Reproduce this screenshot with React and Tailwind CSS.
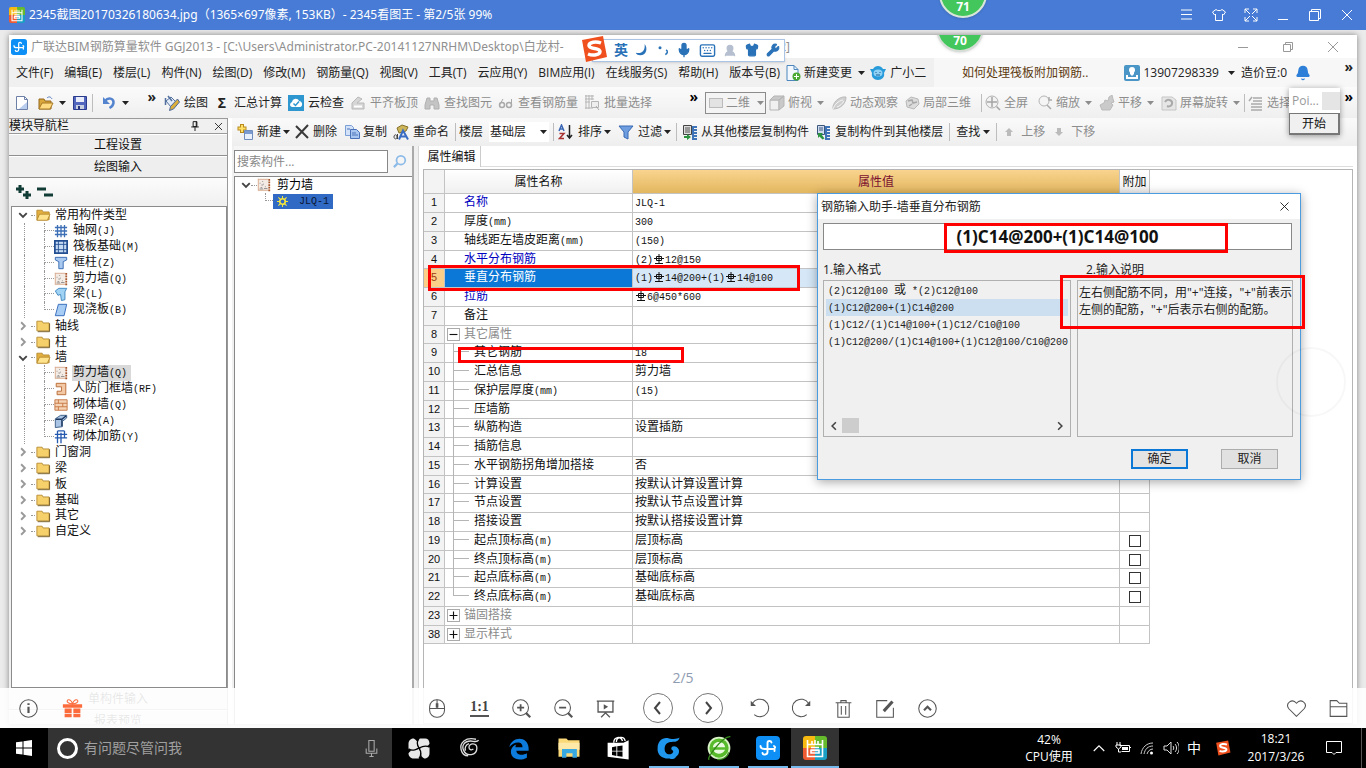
import { Bell, Keyboard, Mic, Shirt, UserRound, Wrench, X } from 'lucide-react'
import clsx from 'clsx'

const YAHEI = "font-['Open_Sans','Noto_Sans_CJK_SC',sans-serif]"
const SONG = "font-['Liberation_Mono','Noto_Sans_CJK_SC',monospace]"

const MENUS = [
  '文件(F)', '编辑(E)', '楼层(L)', '构件(N)', '绘图(D)', '修改(M)', '钢筋量(Q)', '视图(V)',
  '工具(T)', '云应用(Y)', 'BIM应用(I)', '在线服务(S)', '帮助(H)', '版本号(B)',
]

const TREE = [
  { label: '常用构件类型', open: true },
  { label: '轴网(J)', icon: 'grid' },
  { label: '筏板基础(M)', icon: 'raft' },
  { label: '框柱(Z)', icon: 'column' },
  { label: '剪力墙(Q)', icon: 'wall' },
  { label: '梁(L)', icon: 'beam' },
  { label: '现浇板(B)', icon: 'slab', last: true },
  { label: '轴线' },
  { label: '柱' },
  { label: '墙', open: true },
  { label: '剪力墙(Q)', icon: 'wall', selected: true },
  { label: '人防门框墙(RF)', icon: 'door' },
  { label: '砌体墙(Q)', icon: 'brick' },
  { label: '暗梁(A)', icon: 'hidden' },
  { label: '砌体加筋(Y)', icon: 'rebar', last: true },
  { label: '门窗洞' },
  { label: '梁' },
  { label: '板' },
  { label: '基础' },
  { label: '其它' },
  { label: '自定义' },
]

// '#' in a value stands for the HRB400 rebar sign
const ROWS = [
  { no: 1, name: '名称', value: 'JLQ-1', kind: 'link' },
  { no: 2, name: '厚度(mm)', value: '300' },
  { no: 3, name: '轴线距左墙皮距离(mm)', value: '(150)' },
  { no: 4, name: '水平分布钢筋', value: '(2)#12@150', kind: 'link' },
  { no: 5, name: '垂直分布钢筋', value: '(1)#14@200+(1)#14@100', kind: 'active' },
  { no: 6, name: '拉筋', value: '#6@450*600', kind: 'link' },
  { no: 7, name: '备注', value: '' },
  { no: 8, name: '其它属性', value: '', kind: 'group', sign: '-' },
  { no: 9, name: '其它钢筋', value: '18', child: true },
  { no: 10, name: '汇总信息', value: '剪力墙', child: true },
  { no: 11, name: '保护层厚度(mm)', value: '(15)', child: true },
  { no: 12, name: '压墙筋', value: '', child: true },
  { no: 13, name: '纵筋构造', value: '设置插筋', child: true },
  { no: 14, name: '插筋信息', value: '', child: true },
  { no: 15, name: '水平钢筋拐角增加搭接', value: '否', child: true },
  { no: 16, name: '计算设置', value: '按默认计算设置计算', child: true },
  { no: 17, name: '节点设置', value: '按默认节点设置计算', child: true },
  { no: 18, name: '搭接设置', value: '按默认搭接设置计算', child: true },
  { no: 19, name: '起点顶标高(m)', value: '层顶标高', child: true, check: true },
  { no: 20, name: '终点顶标高(m)', value: '层顶标高', child: true, check: true },
  { no: 21, name: '起点底标高(m)', value: '基础底标高', child: true, check: true },
  { no: 22, name: '终点底标高(m)', value: '基础底标高', child: true, check: true, last: true },
  { no: 23, name: '锚固搭接', value: '', kind: 'group', sign: '+' },
  { no: 38, name: '显示样式', value: '', kind: 'group', sign: '+' },
]

const FORMATS = [
  '(2)C12@100 或 *(2)C12@100',
  '(1)C12@200+(1)C14@200',
  '(1)C12/(1)C14@100+(1)C12/C10@100',
  '(1)C12@200/(1)C14@100+(1)C12@100/C10@200',
]

function Rebar() {
  return (
    <svg viewBox="0 0 12 12" className="inline-block h-3 w-3 align-[-2px]" fill="none" stroke="currentColor">
      <path d="M3.500 3.500h5v4h-5zM6 1v9.500M1 5.500h10M2 10.500h8" />
    </svg>
  )
}

// Half-width runs are set at 10px so that two of them fill one 12px ideograph
function Song({ text }) {
  return (
    <span className={clsx(SONG, 'whitespace-pre text-xs')}>
      {text.split(/([\x20-\x22\x24-\x7e]+|#)/).filter(Boolean).map((part, i) => {
        if (part === '#') return <Rebar key={i} />
        return /^[\x20-\x7e]/.test(part) ? <span key={i} className="text-[10px]">{part}</span> : part
      })}
    </span>
  )
}

function Caret() {
  return <svg viewBox="0 0 7 4" className="h-1 w-[7px] shrink-0"><path d="M0 0h7L3.5 4z" fill="currentColor" /></svg>
}

function Svg({ children, className = 'h-4 w-4', box = '0 0 16 16' }) {
  return <svg viewBox={box} className={clsx('shrink-0', className)} fill="none">{children}</svg>
}

const ICONS = {
  file: <><path d="M2.500 1.500h8l3 3v10h-11z" fill="#fff" stroke="#6d80a8" /><path d="M10.500 1.500v3h3" stroke="#6d80a8" /><path d="M5 14h8V7z" fill="#b9cdee" /></>,
  open: <><path d="M1 14V4h5l1 2h6v8z" fill="#d9a73b" stroke="#94671d" /><path d="M1 14l3-6h11l-3 6z" fill="#ffdb82" stroke="#a87824" /><path d="M9 3c2-2 4-1 5 1" stroke="#567cc0" /></>,
  save: <><path d="M1.500 1.500h13v13h-13z" fill="#5266bd" stroke="#2a3a8c" /><path d="M4 2h8v5H4z" fill="#e9edfa" /><path d="M4 10h8v4H4z" fill="#c8cfdf" /><path d="M6 11h2v3H6z" fill="#27357e" /></>,
  undo: <><path d="M4 6C7 2 13 3 12.500 8c-.5 3-2 4-4 5" stroke="#5584cf" strokeWidth="2.500" /><path d="M2 2v7h7z" fill="#5584cf" /></>,
  draw: <><path d="M2 6l5-4 5 5-5 5z" fill="#e4ecf8" stroke="#52719f" /><path d="M1.500 3v7M4 1l4 5" stroke="#52719f" strokeWidth="1.500" /><path d="M13.500 4l2 3-6 7-4 1.500 1-4z" fill="#d9ae3d" stroke="#4a68a0" /></>,
  cloud: <><rect width="16" height="16" fill="#2e97d0" /><path d="M4 12c-3-1-2-4 0-5 1-4 6-4 7-1 4 0 4 6 1 6z" fill="#fff" /><path d="M5.500 8.500l2 2 3.500-4" stroke="#2e97d0" strokeWidth="1.500" /></>,
  align: <><path d="M2 8l6-6 4 2-5 4h7v6H2z" fill="#d6d6d6" stroke="#b8b8b8" /><path d="M4 11.500h8" stroke="#fff" strokeWidth="2" /></>,
  find: <path d="M3 3h3v3h4V3h3l2 7v4h-5v-4H6v4H1v-4z" fill="#c4c4c4" stroke="#b0b0b0" />,
  view: <><circle cx="4" cy="10" r="2.500" stroke="#a9a9a9" strokeWidth="1.500" /><circle cx="11" cy="10" r="2.500" stroke="#a9a9a9" strokeWidth="1.500" /><path d="M1.500 10L5 4M13.500 10V4" stroke="#a9a9a9" /></>,
  batch: <><path d="M1 1h9M1 4h9M1 7h5M2 0v14M5 0v14M8 0v5M1 13h8" stroke="#b5b5b5" /><path d="M7.500 6.500h7v6h-7z" fill="#eee" stroke="#b5b5b5" /><path d="M12 11l3 4" stroke="#aaa" /></>,
  cube: <><path d="M1 5h9v10H1z" fill="#f0f0f0" stroke="#b5b5b5" /><path d="M1 5l4-4h10l-5 4zM10 5l5-4v10l-5 4z" fill="#c9c9c9" stroke="#b5b5b5" /></>,
  orbit: <><path d="M2 14C1 8 8 1 15 2c0 7-6 12-13 12z" fill="#cfcfcf" stroke="#bbb" /><path d="M2 14c2-5 5-8 10-9M6 12c3-1 5-3 7-6" stroke="#f5f5f5" /></>,
  local: <><path d="M2 6l5-4 7 2 1 5-5 5-7-2z" fill="#dcdcdc" stroke="#b8b8b8" /><path d="M4 6l4-1 1 3 4-1M5 11l3-2" stroke="#a8a8a8" strokeWidth="1.500" /></>,
  full: <><circle cx="7" cy="7" r="6" fill="#f2f2f2" stroke="#b0b0b0" /><path d="M7 2v10M2 7h10M11.500 11.500L15 15" stroke="#a5a5a5" strokeWidth="1.500" /></>,
  zoom: <><circle cx="7" cy="6" r="5" fill="#f5f5f5" stroke="#b5b5b5" /><path d="M10 10l4 4M12 2v3h3" stroke="#aaa" strokeWidth="1.500" /></>,
  pan: <path d="M3 15l-2-5 4-2 1-3 3 1 1-4 3-2 1 4 1 3-3 1 2 2-3 5z" fill="#cacaca" stroke="#bbb" />,
  rotate: <><path d="M1 2h10l4 3v10H1z" fill="#e6e6e6" stroke="#c5c5c5" /><path d="M4 7c2-4 8-2 7 2-.5 2-3 3-5 2" stroke="#aaa" strokeWidth="2" /></>,
  pick: <path d="M5 3h9M5 6h9M3 9h11M3 12h11M3 15h11M1 6l3-4" stroke="#aaa" strokeWidth="1.500" />,
  create: <><path d="M5 0v9M.5 4.500h9" stroke="#b88a1c" strokeWidth="4" /><path d="M5 1v7M1.500 4.500h7" stroke="#ffe169" strokeWidth="2" /><path d="M7.500 6.500h8v9h-8z" fill="#e8f0fb" stroke="#6f8cbd" /><path d="M8 7h7v3H8z" fill="#7c9bd0" /></>,
  remove: <path d="M2 2l12 12M14 1L2 14" stroke="#3a3a3a" strokeWidth="2" />,
  copy: <><path d="M1.500 1.500h6l2 2v8h-8z" fill="#d3e2f8" stroke="#7ba0d6" /><path d="M6.500 5.500h6l3 3v6h-9z" fill="#a9c6f0" stroke="#4a72b8" /><path d="M8 9h4M8 11h6M3 5h3" stroke="#4a72b8" /></>,
  rename: <><path d="M4 4l5-3 6 2-2 4-7 2z" fill="#cdb65a" stroke="#85702c" /><path d="M1 13c0-3 3-3 3 0s-3 2-3 0M4.500 10v5" stroke="#444" /><path d="M6 15.500l4-9 5 9M8 12.500h6" stroke="#3b6cc4" strokeWidth="2" /></>,
  sort: <><path d="M1 7l2.500-6L6 7M2 5h3" stroke="#3a67b5" strokeWidth="1.500" /><path d="M1.500 9.500H6L1.500 14.500H6" stroke="#a33" strokeWidth="1.500" /><path d="M11.500 1v13M9 11l2.500 3L14 11" stroke="#222" strokeWidth="1.500" /></>,
  filter: <path d="M1 2h14l-5 6v7l-4-2V8z" fill="#6f9ee0" stroke="#3969b2" />,
  from: <><path d="M1.500 1.500h8v9h-8z" fill="#ddd" stroke="#444" /><path d="M3 4h5M3 6h5M3 8h5" stroke="#555" /><path d="M15 3h-4v12h4M11 6h4M11 9h4M11 12h4" stroke="#3f75b8" strokeWidth="2" /><path d="M2 12h3v-2l4 3-4 3v-2H2z" fill="#2c9440" /></>,
  to: <><path d="M2.500 1.500h7v9h-7z" fill="#cfdcf0" stroke="#3d567c" /><path d="M4 4h4M4 6h4" stroke="#3d567c" /><path d="M15 3h-4v12h4M11 6h4M11 9h4M11 12h4" stroke="#3f75b8" strokeWidth="2" /><path d="M3 9h5L6.500 10.500l3 4-2 1-3-3L3 14z" fill="#2c9440" /></>,
  up: <path d="M8 4l4 4h-2v4H6V8H4z" fill="#bbb" />,
  down: <path d="M8 12l4-4h-2V4H6v4H4z" fill="#bbb" />,
  change: <><path d="M2 .5h7l4 4v11H2z" fill="#f3f8ff" stroke="#4d86bd" /><path d="M9 .5v4h4" stroke="#4d86bd" /><circle cx="11.500" cy="11.500" r="4" fill="#48a832" /><path d="M11.500 9v5M9 11.500h5" stroke="#fff" /></>,
  mascot: <><path d="M0 4l3 0c2-4 8-4 10 0h3l-2 4c1 4-2 7-6 7s-7-3-6-7z" fill="#289bdb" /><ellipse cx="8" cy="8" rx="4.500" ry="3.500" fill="#8fd0f5" /><path d="M6 7v1M10 7v1M6 10h4" stroke="#1c5e92" /></>,
  account: <><rect width="16" height="16" rx="2" fill="#4a97c7" /><circle cx="8" cy="5" r="3" fill="#fff" /><path d="M6 7h4v2l-2 2-2-2z" fill="#fff" /><path d="M3 10v3h10v-3" stroke="#fff" strokeWidth="2" /></>,
  grid: <path d="M4 1v14M8 1v14M12 1v14M1 4h14M1 8h14M1 12h14" stroke="#3c6fb6" strokeWidth="1.500" />,
  raft: <><rect x="1" y="1" width="14" height="14" fill="#c5daf3" stroke="#234f92" strokeWidth="2" /><path d="M5 1v14M11 1v14M1 5h14M1 11h14" stroke="#234f92" /></>,
  column: <path d="M1.500 1.500h13v3l-4 2v8h-5v-8l-4-2z" fill="#a9c9f0" stroke="#2d62ad" />,
  wall: <><path d="M1 1h14v14H1z" fill="#f4ebe5" /><path d="M1 1.500h12M1.500 1v13M1 14h14" stroke="#d8a98c" /><path d="M3 6h1M6 4h1M5 8h2M9 10h1M4 11h2M8 12h4M7 7h1M3 12.500h4" stroke="#888" /><path d="M14 1v14" stroke="#a8562b" strokeDasharray="2 1" strokeWidth="2" /></>,
  beam: <path d="M1.500 4.500l4-3h9l-2 4v9l-4 1-1-7-3 1z" fill="#9fd2f3" stroke="#3781bd" />,
  slab: <path d="M5 1.500h9.500l-3 13H1.500z" fill="#a8cdf5" stroke="#2a62b5" />,
  door: <path d="M2.500 1.500h11v13h-10v-4h5v-5h-6z" fill="#f3c8a4" stroke="#b5652d" />,
  brick: <><path d="M1 2h14v12H1z" fill="#f5d3b5" stroke="#c4733f" /><path d="M1 6h14M1 10h14M5 2v4M10 6v4M5 10v4" stroke="#c4733f" /></>,
  hidden: <><path d="M1.500 5.500l6-4h7v3l-5 4v6l-8 1z" fill="#a9c4e4" stroke="#33567f" /><path d="M2 6h7l5-4M9 6v8" stroke="#1b355c" strokeWidth="1.500" /></>,
  rebar: <path d="M4 1v14M8 3v12M1 5h14M1 9h14M12 1v8M4 1h8" stroke="#2459b0" strokeWidth="1.500" />,
}

function Glyph({ name, className }) {
  return <Svg className={className}>{ICONS[name]}</Svg>
}

function Tool({ icon, label, caret, muted, narrow, children }) {
  return (
    <button className={clsx('flex h-6 shrink-0 items-center whitespace-nowrap', muted ? 'text-[#8d8d8d]' : 'text-[#222]')}>
      <span className={clsx('flex shrink-0 justify-center', narrow ? 'w-[22px]' : 'w-6')}>
        {children || <Glyph name={icon} />}
      </span>
      {label}
      {caret && <span className={clsx('flex justify-center', narrow ? 'w-4' : 'w-[10px]')}><Caret /></span>}
    </button>
  )
}

function Sep() {
  return <span className="h-[18px] w-px shrink-0 bg-[#bdbdbd]" />
}

function Logo2345({ className }) {
  return (
    <Svg className={className} box="0 0 24 24">
      <path d="M0 3a3 3 0 013-3h9v12H0z" fill="#f5b911" />
      <path d="M12 0h9a3 3 0 013 3v9H12z" fill="#66bb2c" />
      <path d="M0 12h12v12H3a3 3 0 01-3-3z" fill="#ee5a32" />
      <path d="M12 12h12v9a3 3 0 01-3 3h-9z" fill="#1a9fc4" />
      <path d="M4.500 4v16.500h15V4M4.500 8.500h15M9 5v3M12 4v4M15 5v3M8 11.500h8M7.500 14h9M8 17h8v-2.500H8z" stroke="#fff" strokeWidth="1.600" />
    </Svg>
  )
}

function LogoGgj({ className }) {
  return (
    <Svg className={className} box="0 0 24 24">
      <rect width="24" height="24" rx="4" fill="#0d8ff5" />
      <path d="M15.500 6.500c-.5-2-4-2-4 .5v9c0 3-4.500 3.500-5 1M4.500 10c0 2 1 3 4 3h8c2.500 0 3.500-2 1.500-3M18.500 13v2" stroke="#fff" strokeWidth="1.900" strokeLinecap="round" />
    </Svg>
  )
}

function LogoSogou({ className }) {
  return (
    <Svg className={className} box="0 0 28 28">
      <path d="M2 5L23 1l4 21-21 5z" fill="#f0501e" />
      <path d="M21 8c-5-2-12-1-12 2.500 0 4 11 2 11 6 0 3.500-7 4.500-12 2.500" stroke="#fff" strokeWidth="3.500" />
    </Svg>
  )
}

function ViewerTitle() {
  return (
    <header className="relative flex h-[30px] shrink-0 items-center overflow-hidden bg-[#477bd5] pl-[9px] text-xs text-white">
      <Logo2345 className="h-4 w-4" />
      <h1 className="ml-1 flex-1 font-['Noto_Sans','Noto_Sans_CJK_SC',sans-serif] whitespace-nowrap">2345截图20170326180634.jpg（1365×697像素, 153KB）- 2345看图王 - 第2/5张 99%</h1>
      <div className="absolute top-[-30px] left-[939px] flex h-12 w-12 items-end justify-center rounded-full border-2 border-[#d9e6da] bg-[#43c75c] pb-[3px] leading-3 font-bold shadow">71</div>
      <div className="flex pr-[3px]">
        {[
          ['菜单', 'M2 3h11M2 7.500h11M2 12h11'],
          ['换肤', 'M5 2.500L1.500 5l2 3 1-1v6.500h7V7l1 1 2-3L11 2.500c-1 1.500-5 1.500-6 0z'],
          ['全屏', 'M2 6V2h4M10 2h4v4M14 10v4h-4M6 14H2v-4M2 2l5 5M14 2L9 7M14 14L9 9M2 14l5-5'],
          ['最小化', 'M3 12.500h10'],
          ['还原', 'M2.500 4.500h9v9h-9zM4.500 4V2.500h9v9H12'],
          ['关闭', 'M3 3l10 10M13 3L3 13'],
        ].map(([name, d]) => (
          <button key={name} aria-label={name} className="flex w-8 justify-center">
            <Svg><path d={d} stroke="#fff" /></Svg>
          </button>
        ))}
      </div>
    </header>
  )
}

function AppTitle() {
  return (
    <div className="relative flex h-[23px] shrink-0 items-center overflow-hidden bg-white pl-[2px] text-xs text-[#8f8f8f]">
      <LogoGgj className="h-4 w-4" />
      <h2 className="ml-1 flex w-[759px] shrink-0 justify-between font-['Noto_Sans','Noto_Sans_CJK_SC',sans-serif] whitespace-nowrap">
        <span>广联达BIM钢筋算量软件 GGJ2013 - [C:\Users\Administrator.PC-20141127NRHM\Desktop\白龙村-</span>
        <span>2]</span>
      </h2>
      <div className="absolute top-[-31px] left-[927px] flex h-12 w-12 items-end justify-center rounded-full border-2 border-[#d5ddd6] bg-[#43c75c] pb-[3px] leading-3 font-bold text-white shadow">70</div>
      <div className="ml-auto flex pr-[2px] text-[#999]">
        {[
          ['最小化', 'M3 8.500h10'],
          ['还原', 'M3.500 5.500h7v7h-7zM5.500 5V3.500h7v7H11'],
          ['关闭', 'M3 3l10 10M13 3L3 13'],
        ].map(([name, d]) => (
          <button key={name} aria-label={name} className="flex w-[45px] justify-center">
            <Svg><path d={d} stroke="currentColor" /></Svg>
          </button>
        ))}
      </div>
    </div>
  )
}

function SogouBar() {
  return (
    <div className="absolute top-0 left-[571px] z-10 flex h-7 w-[205px] items-center">
      <div className="mt-[2px] ml-3 flex h-[23px] w-full items-center justify-between border border-[#a9c4e4] bg-white pr-1 pl-[21px] text-[#2a72b8] shadow-sm">
        <b className="text-[14px] leading-none">英</b>
        <Svg className="h-[14px] w-[14px]"><path d="M11 1c4 5 2 13-5 13-3 0-5-2-5-3 6 2 11-2 10-10z" fill="currentColor" /></Svg>
        <Svg className="h-[14px] w-[12px]"><circle cx="4" cy="5" r="2" fill="currentColor" /><path d="M12 8c3 1 2 5-1 6" stroke="currentColor" strokeWidth="2" /></Svg>
        <Mic className="h-4 w-4" fill="currentColor" />
        <Keyboard className="h-[17px] w-[17px]" />
        <UserRound className="h-[15px] w-[14px] text-[#b5bfd0]" fill="currentColor" />
        <Shirt className="h-[14px] w-[14px]" fill="currentColor" />
        <Wrench className="h-[14px] w-[14px]" fill="currentColor" />
      </div>
      <LogoSogou className="absolute left-0 h-7 w-7" />
    </div>
  )
}

function MenuBar() {
  return (
    <nav className="flex h-[29px] shrink-0 items-center overflow-hidden bg-[#f0f0f0] text-xs whitespace-nowrap text-[#222]">
      <div className="flex h-full flex-1 items-center gap-[5px] pl-[7px]">
        <div className="flex gap-[11px]">
          {MENUS.map((menu) => <button key={menu}>{menu}</button>)}
        </div>
        <button className="flex items-center gap-[3px]"><Glyph name="change" />新建变更<span className="ml-[3px]"><Caret /></span></button>
        <button className="flex items-center gap-1"><Glyph name="mascot" />广小二</button>
      </div>
      <div className="flex h-full w-[423px] shrink-0 items-center bg-[#f7f7f7]">
        <a href="#help" className="ml-7 flex-1 text-[#5c3a10]">如何处理筏板附加钢筋..</a>
        <button className="flex items-center gap-1"><Glyph name="account" />13907298339<span className="mx-[5px]"><Caret /></span></button>
        <button className="ml-px flex items-center gap-2">造价豆:0<Bell className="h-4 w-4 text-[#2d7fd8]" fill="currentColor" /></button>
        <button aria-label="更多" className="mb-3 w-[46px] pr-1 text-right text-sm leading-4 font-bold">»</button>
      </div>
    </nav>
  )
}

function MainToolbar() {
  return (
    <div className="flex h-[31px] shrink-0 items-center bg-gradient-to-b from-[#fbfbfb] to-[#efefef] text-xs">
      <div className="flex w-[149px] shrink-0 items-center pl-[5px] text-[#222]">
        <button aria-label="新建" className="w-6"><Glyph name="file" /></button>
        <button aria-label="打开" className="flex w-[34px] items-center gap-[5px]"><Glyph name="open" /><Caret /></button>
        <button aria-label="保存" className="w-5"><Glyph name="save" /></button>
        <Sep />
        <button aria-label="撤销" className="ml-2 flex items-center gap-[5px]"><Glyph name="undo" /><Caret /></button>
        <span className="mb-3 ml-auto pr-[2px] text-sm leading-4 font-bold">»</span>
      </div>
      <div className="flex w-[545px] shrink-0 items-center gap-[2px] pl-[2px]">
        <Tool icon="draw" label="绘图" />
        <Tool label="汇总计算"><b className="text-sm">Σ</b></Tool>
        <Tool icon="cloud" label="云检查" />
        <Tool icon="align" label="平齐板顶" muted />
        <Tool icon="find" label="查找图元" muted />
        <Tool icon="view" label="查看钢筋量" muted />
        <Tool icon="batch" label="批量选择" muted />
        <span className="mb-3 ml-auto pr-[5px] text-sm leading-4 font-bold">»</span>
      </div>
      <button className="ml-[2px] flex h-[22px] w-[61px] shrink-0 items-center gap-[3px] border border-[#8c8c8c] bg-[#f4f4f4] pl-[3px] text-[#8d8d8d]">
        <span className="h-[10px] w-[14px] border border-[#bbb] bg-[#e3e3e3]" />二维<span className="ml-1"><Caret /></span>
      </button>
      <div className="flex flex-1 items-center overflow-hidden">
        <Tool icon="cube" label="俯视" caret muted narrow />
        <Tool icon="orbit" label="动态观察" muted narrow />
        <span className="w-[3px]" />
        <Tool icon="local" label="局部三维" muted narrow />
        <span className="w-[10px]" />
        <Sep />
        <Tool icon="full" label="全屏" muted narrow />
        <span className="w-[6px]" />
        <Tool icon="zoom" label="缩放" caret muted narrow />
        <Tool icon="pan" label="平移" caret muted narrow />
        <Tool icon="rotate" label="屏幕旋转" caret muted narrow />
        <Sep />
        <Tool icon="pick" label="选择" muted narrow />
      </div>
      <span className="mb-3 pr-1 text-sm leading-4 font-bold">»</span>
    </div>
  )
}

function Folder({ open }) {
  return (
    <Svg className="h-[14px] w-4">
      <path d="M1 2.500h6l1 2h7v9H1z" fill={open ? '#e3b040' : '#f6d06a'} stroke="#b5892e" />
      {open ? <path d="M1 14l3-7h12l-3 7z" fill="#ffe28c" stroke="#b5892e" /> : <path d="M2 14.500h13.500V5" stroke="#6e551f" />}
    </Svg>
  )
}

function TreeRow({ item }) {
  if (item.icon) {
    return (
      <li className="flex h-4 items-center pl-3 nth-[5n]:h-[15px]">
        <span className="h-full w-5 border-l border-dotted border-[#999]" />
        <span className="flex h-full w-[10px] flex-col">
          <span className="h-1/2 border-b border-l border-dotted border-[#999]" />
          <span className={clsx('h-1/2', !item.last && 'border-l border-dotted border-[#999]')} />
        </span>
        <Glyph name={item.icon} className="h-[14px] w-[14px]" />
        <span className={clsx('ml-1 flex h-full items-center pl-px pr-1', item.selected && 'bg-[#d9d9d9]')}><Song text={item.label} /></span>
      </li>
    )
  }
  return (
    <li className="flex h-4 items-center pl-[6px] nth-[5n]:h-[15px]">
      <Svg className="h-[10px] w-[10px]">
        <path d={item.open ? 'M2 5l6 6 6-6' : 'M5 2l6 6-6 6'} stroke={item.open ? '#444' : '#999'} strokeWidth="3" />
      </Svg>
      <span className="ml-[3px] w-1 border-t border-dotted border-[#999]" />
      <Folder open={item.open} />
      <span className="ml-1"><Song text={item.label} /></span>
    </li>
  )
}

function NavPanel() {
  const bar = 'flex h-[22px] w-full shrink-0 items-center justify-center border-t border-b border-t-white border-b-[#8f8f8f] bg-[#eee]'
  return (
    <aside className="flex w-[219px] shrink-0 flex-col border-r border-[#999] bg-[#f0f0f0] text-xs text-[#111]">
      <div className="flex h-4 shrink-0 items-center border-t border-b border-[#9b9b9b]">
        <span className="flex-1">模块导航栏</span>
        <Svg className="mr-3 h-[10px] w-[10px]"><path d="M5 1h6v8H5zM2 9.500h12M8 10v6M10 1v8" stroke="#111" strokeWidth="1.500" /></Svg>
        <X className="mr-[2px] h-[13px] w-[13px]" strokeWidth={1.500} />
      </div>
      <button className={bar}>工程设置</button>
      <button className={bar}>绘图输入</button>
      <div className="flex h-7 shrink-0 items-center gap-[6px] bg-gradient-to-b from-[#fcfcfc] to-[#f0f0f0] pl-[6px]">
        <Svg className="h-4 w-4"><path d="M5 1v8M1 5h8M12 7v8M8 11h8" stroke="#123c36" strokeWidth="3" /></Svg>
        <Svg className="h-4 w-4"><path d="M0 5h9M7 11h9" stroke="#123c36" strokeWidth="3" /></Svg>
      </div>
      <ul className="ml-[2px] h-[482px] shrink-0 border border-[#8b8b8b] bg-white">
        {TREE.map((item, i) => <TreeRow key={i} item={item} />)}
      </ul>
      <button className={bar}>单构件输入</button>
      <button className={bar}>报表预览</button>
    </aside>
  )
}

function ComponentToolbar() {
  return (
    <div className="flex h-7 shrink-0 items-center bg-gradient-to-b from-[#fafafa] to-[#eee] pl-px text-xs">
      <Tool icon="create" label="新建" caret />
      <Tool icon="remove" label="删除" narrow />
      <span className="w-1" />
      <Tool icon="copy" label="复制" narrow />
      <span className="w-[2px]" />
      <Tool icon="rename" label="重命名" />
      <span className="w-[6px]" />
      <Sep />
      <label htmlFor="floor" className="pl-[3px] text-[#222]">楼层</label>
      <span className="relative ml-[6px] flex items-center text-[#222]">
        <select id="floor" className="h-5 w-[60px] appearance-none bg-white pl-px">
          <option>基础层</option>
        </select>
        <span className="pointer-events-none absolute right-[2px]"><Caret /></span>
      </span>
      <span className="w-1" />
      <Sep />
      <Tool icon="sort" label="排序" caret />
      <span className="w-[2px]" />
      <Tool icon="filter" label="过滤" caret />
      <span className="w-1" />
      <Sep />
      <span className="w-[2px]" />
      <Tool icon="from" label="从其他楼层复制构件" narrow />
      <span className="w-[2px]" />
      <Tool icon="to" label="复制构件到其他楼层" />
      <span className="w-[6px]" />
      <Sep />
      <button className="flex items-center gap-[3px] px-[6px] text-[#222]">查找<Caret /></button>
      <Sep />
      <Tool icon="up" label="上移" muted />
      <span className="w-[2px]" />
      <Tool icon="down" label="下移" muted />
    </div>
  )
}

function ComponentList() {
  return (
    <section className="flex w-[182px] shrink-0 flex-col border-r-2 border-[#aaa] pl-[2px] text-xs">
      <div className="flex h-[30px] shrink-0 items-center bg-[#f5f5f5]">
        <input aria-label="搜索构件" placeholder="搜索构件..." className="h-[23px] min-w-0 flex-1 border border-[#888] bg-white pl-[2px] placeholder:text-[#888]" />
        <button aria-label="搜索" className="flex w-6 justify-center">
          <Svg className="h-[14px] w-[14px]"><circle cx="9" cy="7" r="5" stroke="#8dbbe8" strokeWidth="2" /><path d="M5 11l-4 4" stroke="#8dbbe8" strokeWidth="2.500" /></Svg>
        </button>
      </div>
      <ul className="flex-1 border-t border-l border-[#888] bg-white">
        <li className="flex h-4 items-center pl-[6px]">
          <Svg className="h-[10px] w-[10px]"><path d="M2 5l6 6 6-6" stroke="#444" strokeWidth="3" /></Svg>
          <span className="w-[6px] border-t border-dotted border-[#999]" />
          <Glyph name="wall" className="h-[14px] w-[14px]" />
          <span className="ml-[6px]">剪力墙</span>
        </li>
        <li className="flex h-4 items-center pl-[30px]">
          <span className="mb-2 h-2 w-2 border-b border-l border-dotted border-[#999]" />
          <span className="flex h-[15px] items-center gap-[11px] bg-[#316ac5] px-1 text-[#0a1630]">
            <Svg className="h-[11px] w-[11px]"><circle cx="8" cy="8" r="4" stroke="#f5e63c" strokeWidth="2.500" /><path d="M8 0v4M8 12v4M0 8h4M12 8h4M2 2l3 3M11 11l3 3M14 2l-3 3M5 11l-3 3" stroke="#f5e63c" strokeWidth="1.500" /></Svg>
            <Song text="JLQ-1" />
          </span>
        </li>
      </ul>
    </section>
  )
}

function PropertyRow({ row }) {
  const active = row.kind === 'active'
  const cell = 'border-r border-b border-[#c3c3c3] p-0 align-top'
  return (
    <tr className="h-[19px] nth-[4n]:h-[18px]">
      <th scope="row" className={clsx(cell, 'font-normal', active ? 'bg-[#fbcf87] text-[#a03a10]' : 'bg-[#f3f3f3]')}>
        <div className="h-[17px] overflow-hidden text-center font-['Liberation_Sans',sans-serif] text-[11px] leading-[17px]">{row.no}</div>
      </th>
      <td className={clsx(cell, active && 'bg-[#0b78d7] text-white', row.kind === 'link' && 'text-[#0000c0]', row.kind === 'group' && 'text-[#8a8a8a]')}>
        <div className="flex h-[17px] items-center">
          {row.sign && (
            <button aria-label={row.name} className="mx-[2px] flex h-[13px] w-[13px] items-center justify-center border border-[#aaa] bg-white">
              <Svg className="h-[9px] w-[9px]"><path d={row.sign === '+' ? 'M1 8h14M8 1v14' : 'M1 8h14'} stroke="#111" strokeWidth="2" /></Svg>
            </button>
          )}
          {row.child && (
            <span className="ml-2 flex h-[19px] w-[21px] shrink-0 flex-col">
              <span className="h-[9px] w-4 border-b border-l border-[#b5b5b5]" />
              <span className={clsx('h-[10px]', !row.last && 'border-l border-[#b5b5b5]')} />
            </span>
          )}
          <span className={clsx(row.sign ? 'ml-[2px]' : !row.child && 'ml-[19px]')}><Song text={row.name} /></span>
        </div>
      </td>
      <td className={clsx(cell, active && 'bg-[#d6e8f8]')}>
        <div className="flex h-[17px] items-center overflow-hidden pl-[2px]"><Song text={row.value} /></div>
      </td>
      <td className={cell}>
        <div className="flex h-[17px] items-center justify-center">
          {row.check && <input type="checkbox" aria-label={row.name} className="h-3 w-3 appearance-none border border-[#333] bg-white" />}
        </div>
      </td>
    </tr>
  )
}

function PropertyPanel() {
  return (
    <section className="flex min-w-0 flex-1 flex-col border-l border-[#d5d5d5] bg-white pr-1 pl-1 text-xs text-[#111]">
      <div className="flex h-[21px] shrink-0 items-end">
        <button className="h-full w-[58px] border-r border-[#ccc] text-center">属性编辑</button>
        <span className="flex-1 border-b border-[#ddd]" />
      </div>
      <div className="mt-[2px] flex-1 border border-[#b5b5b5]">
        <table className="table-fixed border-separate border-spacing-0">
          <colgroup>
            <col className="w-[21px]" />
            <col className="w-[188px]" />
            <col className="w-[487px]" />
            <col className="w-[30px]" />
          </colgroup>
          <thead>
            <tr className="h-6">
              <th className="border-r border-b border-[#c3c3c3] bg-[#f3f3f3] p-0" />
              <th className="border-r border-b border-[#c3c3c3] bg-gradient-to-b from-white to-[#f0f0f0] p-0 font-normal">属性名称</th>
              <th className="border-r border-b border-[#c3c3c3] bg-gradient-to-b from-[#f9d48e] to-[#e3b75f] p-0 font-normal text-[#7a1030]">属性值</th>
              <th className="border-r border-b border-[#c3c3c3] bg-gradient-to-b from-white to-[#f0f0f0] p-0 font-normal">附加</th>
            </tr>
          </thead>
          <tbody>
            {ROWS.map((row) => <PropertyRow key={row.no} row={row} />)}
          </tbody>
        </table>
      </div>
    </section>
  )
}

function RebarDialog() {
  return (
    <div role="dialog" aria-label="钢筋输入助手" className="absolute top-[158px] left-[808px] flex h-[287px] w-[484px] flex-col border border-[#4a9be0] bg-[#f0f0f0] text-xs text-[#222] shadow-[0_2px_10px_rgba(0,0,0,0.35)]">
      <div className="flex h-[25px] shrink-0 items-center justify-between bg-white pr-2 pl-[3px]">
        <h3>钢筋输入助手-墙垂直分布钢筋</h3>
        <button aria-label="关闭"><X className="h-[15px] w-[15px]" strokeWidth={1.500} /></button>
      </div>
      <input
        aria-label="钢筋信息"
        defaultValue="(1)C14@200+(1)C14@100"
        className="mr-2 ml-[5px] mt-1 h-[27px] shrink-0 border border-[#888] bg-white text-center font-['Noto_Sans',sans-serif] text-[17px] font-bold text-[#111]"
      />
      <div className="mx-[5px] mt-[9px] flex h-[21px] items-center">
        <h4 className="w-[263px]">1.输入格式</h4>
        <h4>2.输入说明</h4>
      </div>
      <div className="mr-2 ml-[5px] flex h-[157px] gap-[6px]">
        <div className="flex w-[249px] flex-col border border-[#b0b0b0] px-[2px] pb-[2px]">
          <ul className="flex-1 pt-[1px]">
            {FORMATS.map((format, i) => (
              <li key={format} className={clsx('flex h-[17px] items-center pl-[2px]', i === 1 && 'bg-[#cbdff0]')}><Song text={format} /></li>
            ))}
          </ul>
          <div className="flex h-[17px] items-center px-[3px]">
            <Svg className="h-[10px] w-[10px]"><path d="M11 2L5 8l6 6" stroke="#444" strokeWidth="2.500" /></Svg>
            <span className="ml-[3px] h-[15px] w-[17px] bg-[#cdcdcd]" />
            <Svg className="ml-auto h-[10px] w-[10px]"><path d="M5 2l6 6-6 6" stroke="#444" strokeWidth="2.500" /></Svg>
          </div>
        </div>
        <p className="flex-1 border border-[#b0b0b0] pt-[3px] pl-px leading-[17px] whitespace-nowrap">
          左右侧配筋不同，用"+"连接，"+"前表示<br />左侧的配筋，"+"后表示右侧的配筋。
        </p>
      </div>
      <div className="mt-3 mr-[22px] flex justify-end gap-[33px]">
        <button className="h-5 w-[57px] border-2 border-[#0b78d7] bg-[#e3e3e3]">确定</button>
        <button className="h-5 w-[57px] border border-[#adadad] bg-[#e1e1e1]">取消</button>
      </div>
    </div>
  )
}

function PointerWindow() {
  return (
    <div className="absolute top-[53px] left-[1280px] w-[51px] bg-white text-xs shadow-[0_1px_6px_rgba(0,0,0,0.4)]">
      <div className="flex h-[25px] items-center justify-between pl-[3px] text-[#999]">Poi...<span className="h-[18px] w-[18px] bg-[#e5e5e5]" /></div>
      <button className="block h-[22px] w-full border-t border-r-2 border-b-2 border-l border-[#777] bg-[#f0f0f0] text-[#111]">开始</button>
    </div>
  )
}

function Marks() {
  const mark = 'pointer-events-none absolute border-3 border-[#fe0000]'
  return (
    <>
      <span className={clsx(mark, 'top-[230px] left-[419px] h-[26px] w-[372px]')} />
      <span className={clsx(mark, 'top-[312px] left-[449px] h-4 w-[226px]')} />
      <span className={clsx(mark, 'top-[188px] left-[935px] h-[30px] w-[284px]')} />
      <span className={clsx(mark, 'top-[240px] left-[1051px] h-[54px] w-[245px]')} />
    </>
  )
}

const CENTER_TOOLS = [
  ['滚轮', <><rect x="3" y="2" width="17" height="20" rx="8" /><path d="M3 12h17M11.500 2v10" /><path d="M11.500 6v5" strokeWidth="3" /></>],
  ['原始尺寸', null],
  ['放大', <><circle cx="11" cy="11" r="9" /><path d="M17 17l5 5" strokeWidth="2.500" /><path d="M7 11h8M11 7v8" strokeWidth="2" /></>],
  ['缩小', <><circle cx="11" cy="11" r="9" /><path d="M17 17l5 5" strokeWidth="2.500" /><path d="M7 11h8" strokeWidth="2" /></>],
  ['幻灯片', <><path d="M2 3.500h20M3.500 4v12h17V4M7 22l5-5 5 5" strokeWidth="1.500" /><path d="M10 7l5 3-5 3z" fill="#555" stroke="none" /></>],
]

const EDIT_TOOLS = [
  ['左旋', <><path d="M4 6a10 10 0 112 13" /><path d="M2 3v6h6z" fill="#555" stroke="none" /></>],
  ['右旋', <><path d="M20 6a10 10 0 10-2 13" /><path d="M22 3v6h-6z" fill="#555" stroke="none" /></>],
  ['删除', <path d="M3 5.500h18M9 5V3h6v2M5.500 6v16h13V6M9.500 9v10M14.500 9v10" />],
  ['编辑', <><path d="M14 3H2v19h19V11" /><path d="M10 15L20 4" strokeWidth="3.500" /></>],
  ['更多', <><circle cx="12" cy="12" r="10" /><path d="M8 14l4-4 4 4" strokeWidth="2.500" /></>],
]

function RoundButton({ name, d }) {
  return (
    <button aria-label={name} className="flex w-[50px] justify-center">
      <span className="flex h-[30px] w-[30px] items-center justify-center rounded-full border border-[#777]">
        <Svg className="h-4 w-4"><path d={d} stroke="#444" strokeWidth="2" /></Svg>
      </span>
    </button>
  )
}

function ViewerButton({ name, width = 'w-[42px]', children }) {
  return (
    <button aria-label={name} className={clsx('flex justify-center', width)}>
      <svg viewBox="0 0 24 24" className="h-[21px] w-[21px]" fill="none" stroke="#555" strokeWidth="1.200">{children}</svg>
    </button>
  )
}

function ViewerToolbar() {
  return (
    <div className="absolute inset-x-0 bottom-0 flex h-10 items-center justify-between bg-white/90">
      <div className="flex flex-1 pl-[6px]">
        <ViewerButton name="信息" width="w-11"><circle cx="12" cy="12" r="10" /><path d="M12 10v7M12 6v2" strokeWidth="2.500" /></ViewerButton>
        <ViewerButton name="礼物" width="w-11">
          <g fill="#fb6b3c" stroke="none"><path d="M1 7h22v4H1zM3 12h8v5H3zM13 12h8v5h-8zM3 18h8v4H3zM13 18h8v4h-8z" /></g>
          <path d="M12 7C8 6 5 5 6 3s5-1 6 4c1-5 5-6 6-4s-2 3-6 4z" stroke="#fb6b3c" />
        </ViewerButton>
      </div>
      <div className="flex items-center">
        {CENTER_TOOLS.map(([name, art]) => art ? <ViewerButton key={name} name={name}>{art}</ViewerButton> : (
          <button key={name} className="flex w-[42px] justify-center">
            <span className="border-b-2 border-[#555] font-['Liberation_Serif',serif] text-sm leading-4 font-bold text-[#444]">1:1</span>
          </button>
        ))}
        <span className="w-[6px]" />
        <RoundButton name="上一张" d="M10 2L5 8l5 6" />
        <RoundButton name="下一张" d="M6 2l5 6-5 6" />
        <span className="w-[6px]" />
        {EDIT_TOOLS.map(([name, art]) => <ViewerButton key={name} name={name}>{art}</ViewerButton>)}
      </div>
      <div className="flex flex-1 justify-end pr-[7px]">
        <ViewerButton name="收藏"><path d="M12 21L3 12C-1 6 7 0 12 6c5-6 13 0 9 6z" /></ViewerButton>
        <ViewerButton name="文件夹"><path d="M2.500 3v18h19V6H13l-3-3zM2.500 10h19" /></ViewerButton>
      </div>
    </div>
  )
}

const APPS = [
  {
    name: '风车',
    art: (
      <g fill="#e8e8e8">
        <path d="M17 5h6c3 0 5 2 5 6-3 5-9 4-12 5-2-4-2-9 1-11z" />
        <path d="M28 15v7c0 4-3 6-6 6-5-3-4-8-5-11 3-3 8-4 11-2z" />
        <path d="M16 28h-6c-4 0-6-3-6-6 3-5 8-4 12-5 2 4 3 8 0 11z" />
        <path d="M4 17v-6c0-4 3-6 6-6 5 3 5 7 6 11-4 3-9 4-12 1z" />
        <path d="M16 5c-3 4-2 8 0 11s3 8 0 12M4 17c5 3 8 1 12-1s8-3 12-1" stroke="#000" strokeWidth="1.500" fill="none" />
      </g>
    ),
  },
  { name: '广联达', art: <path d="M27 7c-2 3-6 1-9 1-7 0-11 5-8 11 3 7 15 6 15-3 0-6-9-6-9-1 0 3 3 4 5 2M24 6C12 3 5 10 7 18c1 4 4 7 8 7M16 11c-4 1-5 5-4 8" stroke="#ddd" strokeWidth="1.500" /> },
  { name: 'Edge', art: <path d="M5 15C7 3 26 1 27 16v3H13c0 5 7 6 12 3v5C16 32 5 28 7 18c1-3 3-5 6-6-1 1-1 2-1 3h8c0-8-11-6-15 0z" fill="#0c7bdc" /> },
  { name: '资源管理器', art: <><path d="M4 5h9l2 2h13v19H4z" fill="#fbd978" /><path d="M4 10h24v8H4z" fill="#ffe9a8" /><path d="M8 17h17v10h-5v-5h-7v5H8z" fill="#38a8e0" /></> },
  { name: '应用商店', art: <><path d="M3 10h18l6-3v22L3 26z" fill="#fff" /><path d="M10 10c0-7 8-8 10-2M13 9c0-6 9-7 10-1" stroke="#fff" strokeWidth="1.500" /><path d="M8 15l5-1v5H8zM14 14l6-1v6h-6zM8 20h5v5l-5-1zM14 20h6v6l-6-1z" fill="#000" /></> },
  { name: '广联达云', running: true, art: <path d="M28 4c-1 5-5 5-9 5-5 0-8 3-8 8 0 4 3 7 7 6 3-1 4-4 1-5-1-2 0-4 3-4 7 1 7 9 2 12-1 3-6 3-7 2-8 1-15-4-14-12C3 8 9 3 16 5c5 1 9 1 12-1z" fill="#1f97ee" /> },
  { name: '浏览器', running: true, art: <><circle cx="16" cy="16" r="12" fill="#57bb2c" stroke="#d9f2c8" strokeWidth="2" /><path d="M9 15c1-8 13-8 14 0zM9 18h14c-3 6-11 6-14 0z" fill="#e9f9df" /><path d="M5 29C0 30 20 2 29 3M14 29c8 1 12-4 13-8" stroke="#348a19" strokeWidth="1.500" /></> },
]

function Taskbar() {
  return (
    <footer className="flex h-10 shrink-0 items-center bg-black text-xs text-white">
      <button aria-label="开始" className="flex w-12 justify-center">
        <Svg><path d="M0 2.300l6.500-.9v6.100H0zM7.500 1.200L16 0v7.500H7.500zM0 8.500h6.500v6.100L0 13.700zM7.500 8.500H16V16l-8.500-1.200z" fill="#fff" /></Svg>
      </button>
      <div className="flex h-full w-[344px] items-center bg-[#333] pl-[9px]">
        <span className="h-[21px] w-[21px] rounded-full border-3 border-white" />
        <input aria-label="有问题尽管问我" placeholder="有问题尽管问我" className="ml-[6px] min-w-0 flex-1 bg-transparent text-sm placeholder:text-[#a0a0a0]" />
        <Svg className="mr-3 h-[17px] w-[17px]"><path d="M5.500 .5h5v10h-5zM3 8v4.500h10V8M8 12.500V15M6 15.500h4" stroke="#aaa" /></Svg>
      </div>
      <div className="flex h-full pl-[2px]">
        {APPS.map((app) => (
          <button key={app.name} aria-label={app.name} className="flex h-full w-[50px] flex-col items-center justify-end">
            <span className="flex h-9 items-center"><Svg box="0 0 32 32" className="h-7 w-7">{app.art}</Svg></span>
            <span className={clsx('h-[2px] w-10', app.running && 'bg-[#76b9ed]')} />
          </button>
        ))}
        <button aria-label="钢筋算量" className="flex h-full w-[47px] flex-col items-center justify-end">
          <span className="flex h-9 items-center"><LogoGgj className="h-6 w-6" /></span>
          <span className="h-[2px] w-10 bg-[#76b9ed]" />
        </button>
        <button aria-label="看图王" className="flex h-full w-12 flex-col items-center justify-end bg-[#333]">
          <span className="flex h-9 items-center"><Logo2345 className="h-6 w-6" /></span>
          <span className="h-[2px] w-full bg-[#76b9ed]" />
        </button>
      </div>
      <p className="ml-auto w-[76px] text-center leading-[17px]">42%<br />CPU使用</p>
      <div className="flex items-center">
        <Svg className="mx-[6px] h-3 w-3"><path d="M1 12l7-7 7 7" stroke="#fff" strokeWidth="1.500" /></Svg>
        <Svg className="mx-1 h-4 w-4"><path d="M4.500 5.500h10v6h-8M15 7.500h1M2 2v3M5 2v3M1 5h5v2L3.500 9 1 7zM3.500 9v3H6" stroke="#fff" /><path d="M7 7h6v3H7z" fill="#fff" /></Svg>
        <Svg className="mx-1 h-4 w-4"><path d="M2 14C3 7 8 3 14 3M5 14c1-5 4-8 9-8M8 14c1-3 3-5 6-5" stroke="#ccc" /><circle cx="12.500" cy="13" r="1.500" fill="#fff" /></Svg>
        <Svg className="mx-1 h-4 w-4"><path d="M1 6h3l4-4v12l-4-4H1zM10 6c1 1 1 3 0 4M12 4c2 2 2 6 0 8M14 2c3 3 3 9 0 12" stroke="#ddd" /></Svg>
        <span className="mx-1 text-sm">中</span>
        <LogoSogou className="mx-[10px] h-4 w-4" />
      </div>
      <p className="w-[70px] text-center leading-[18px]">18:21<br />2017/3/26</p>
      <button aria-label="通知" className="mr-3 ml-2 flex w-[30px] justify-center">
        <Svg><path d="M.500 1.500h15v11H10l-2 2-2-2H.500z" stroke="#fff" /></Svg>
      </button>
      <span className="mr-1 h-full w-px bg-[#555]" />
    </footer>
  )
}

export default function App() {
  return (
    <div className={clsx(YAHEI, 'flex h-screen flex-col overflow-hidden')}>
      <ViewerTitle />
      <main className="relative flex min-h-0 flex-1 flex-col overflow-hidden bg-[#ebebeb] px-[9px] pt-[5px] pb-1">
        <div className="relative flex min-h-0 flex-1 flex-col bg-white shadow-[0_0_6px_rgba(0,0,0,0.45)]">
          <AppTitle />
          <SogouBar />
          <MenuBar />
          <MainToolbar />
          <div className="flex min-h-0 flex-1 overflow-hidden">
            <NavPanel />
            <div className="ml-1 flex min-w-0 flex-1 flex-col bg-[#f0f0f0]">
              <ComponentToolbar />
              <div className="flex min-h-0 flex-1 gap-1">
                <ComponentList />
                <PropertyPanel />
              </div>
            </div>
          </div>
          <RebarDialog />
          <PointerWindow />
          <Marks />
        </div>
        <span className="pointer-events-none absolute top-[317px] right-5 h-[70px] w-[70px] rounded-full border-2 border-black/3" />
        <p className="absolute bottom-10 left-1/2 -translate-x-1/2 text-sm text-[#8f9bb0]">2/5</p>
        <ViewerToolbar />
      </main>
      <Taskbar />
    </div>
  )
}
